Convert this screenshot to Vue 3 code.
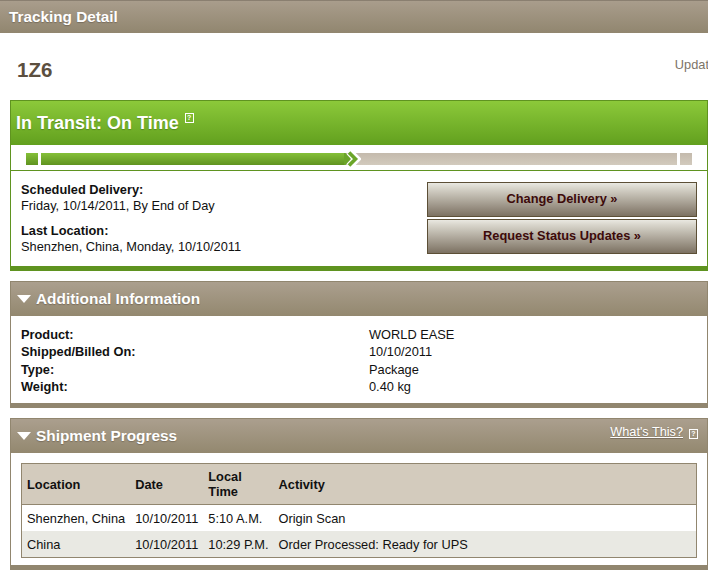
<template>
  <div class="page">
    <div class="top-bar">Tracking Detail</div>

    <div class="number-row">
      <span class="number">1Z6</span>
      <span class="updated">Updat</span>
    </div>

    <section class="status">
      <div class="status-head">
        <h2>In Transit: On Time</h2>
        <span class="help help-status">?</span>
      </div>
      <div class="track">
        <span class="seg done small"></span>
        <span class="seg done long"></span>
        <svg class="chevrons" width="17" height="18" viewBox="0 0 17 18">
          <path d="M5 2 L12 9 L5 16" fill="none" stroke="#fff" stroke-width="8" />
          <path d="M5 2.5 L11.5 9 L5 15.5" fill="none" stroke="#6ba528" stroke-width="3.6" />
          <path d="M0 3 H1.5 L7 9 L1.5 15 H0 Z" fill="#6ba528" />
        </svg>
        <span class="seg todo rest"></span>
        <span class="seg todo small"></span>
      </div>
      <div class="status-body">
        <div class="facts">
          <p><strong>Scheduled Delivery:</strong><br />Friday, 10/14/2011, By End of Day</p>
          <p><strong>Last Location:</strong><br />Shenzhen, China, Monday, 10/10/2011</p>
        </div>
        <div class="actions">
          <button v-for="label in actions" :key="label" type="button">{{ label }} »</button>
        </div>
      </div>
    </section>

    <section class="panel">
      <div class="panel-head">
        <svg class="arrow" width="14" height="8" viewBox="0 0 14 8"><path d="M0 0 H14 L7 8 Z" fill="#fff" /></svg>
        <h3>Additional Information</h3>
      </div>
      <div class="info">
        <template v-for="row in info" :key="row.label">
          <strong>{{ row.label }}</strong>
          <span>{{ row.value }}</span>
        </template>
      </div>
    </section>

    <section class="panel">
      <div class="panel-head">
        <svg class="arrow" width="14" height="8" viewBox="0 0 14 8"><path d="M0 0 H14 L7 8 Z" fill="#fff" /></svg>
        <h3>Shipment Progress</h3>
        <a class="whats" href="#">What's This?</a>
        <span class="help help-panel">?</span>
      </div>
      <div class="progress">
        <table>
          <thead>
            <tr>
              <th class="col-location">Location</th>
              <th class="col-date">Date</th>
              <th class="col-time">Local<br />Time</th>
              <th>Activity</th>
            </tr>
          </thead>
          <tbody>
            <tr v-for="row in scans" :key="row.time">
              <td>{{ row.location }}</td>
              <td>{{ row.date }}</td>
              <td>{{ row.time }}</td>
              <td>{{ row.activity }}</td>
            </tr>
          </tbody>
        </table>
      </div>
    </section>
  </div>
</template>

<script setup>
const actions = ['Change Delivery', 'Request Status Updates']

const info = [
  { label: 'Product:', value: 'WORLD EASE' },
  { label: 'Shipped/Billed On:', value: '10/10/2011' },
  { label: 'Type:', value: 'Package' },
  { label: 'Weight:', value: '0.40 kg' }
]

const scans = [
  { location: 'Shenzhen, China', date: '10/10/2011', time: '5:10 A.M.', activity: 'Origin Scan' },
  { location: 'China', date: '10/10/2011', time: '10:29 P.M.', activity: 'Order Processed: Ready for UPS' }
]
</script>

<style>
html, body {
  overflow: hidden;
  background: #fff;
}
</style>

<style scoped>
.page {
  width: 708px;
  height: 570px;
  overflow: hidden;
  font-family: "Liberation Sans", Arial, sans-serif;
  font-size: 12.8px;
  color: #111;
}
.top-bar {
  height: 32px;
  padding-left: 9px;
  line-height: 32px;
  border-top: 1px solid #8a7f70;
  background: linear-gradient(#a99d8c, #91866f);
  color: #fff;
  font-size: 15.3px;
  font-weight: bold;
  text-shadow: 0 1px 1px rgba(60, 50, 40, .35);
}
.number-row {
  display: flex;
  height: 67px;
  padding-left: 17px;
}
.number {
  margin-top: 25px;
  font-size: 20.5px;
  line-height: 23px;
  font-weight: bold;
  color: #5c4f3f;
}
.updated {
  margin-left: auto;
  margin-right: -1px;
  margin-top: 25px;
  line-height: 14px;
  color: #7d7468;
}
.status {
  margin-left: 10px;
  width: 698px;
  box-sizing: border-box;
  border: 1px solid #5f9320;
  border-bottom: 5px solid #5f9320;
}
.status-head {
  display: flex;
  height: 44px;
  padding-left: 5px;
  background: linear-gradient(#8cc93a, #62a01e);
  color: #fff;
}
.status-head h2 {
  margin: 12px 0 0;
  font-size: 18px;
  line-height: 21px;
  font-weight: bold;
  text-shadow: 0 1px 1px rgba(40, 70, 10, .35);
}
.help {
  box-sizing: border-box;
  width: 9px;
  height: 10px;
  border: 1px solid #fff;
  color: #fff;
  font-size: 7px;
  line-height: 8px;
  text-align: center;
  font-weight: bold;
}
.help-status {
  margin: 12px 0 0 6px;
}
.track {
  position: relative;
  display: flex;
  height: 26px;
  padding: 8px 15px 5px;
  box-sizing: border-box;
  border-bottom: 1px solid #5f9320;
  gap: 3px;
}
.seg {
  height: 12px;
  flex: none;
}
.seg.small {
  width: 12px;
}
.seg.done {
  background: linear-gradient(#85c038, #5f9320);
}
.seg.todo {
  background: linear-gradient(#c4baac, #d2cabd);
}
.seg.long {
  width: 304px;
}
.seg.rest {
  width: 332px;
  margin-left: -3px;
}
.chevrons {
  position: absolute;
  left: 333px;
  top: 5px;
  z-index: 1;
}
.status-body {
  display: flex;
  justify-content: space-between;
  height: 95px;
  padding: 11px 10px 0;
  box-sizing: border-box;
}
.facts p {
  margin: 0 0 9px;
  line-height: 16px;
  color: #111;
}
.actions {
  display: flex;
  flex-direction: column;
  gap: 2px;
}
.actions button {
  width: 270px;
  height: 35px;
  padding: 0 0 2px;
  border: 1px solid #5c4f36;
  background: linear-gradient(#e9e8e1, #d8d5cb 15%, #7c7162);
  color: #3d0a0a;
  font-family: inherit;
  font-size: 12.8px;
  font-weight: bold;
}
.panel {
  margin: 10px 0 0 10px;
  width: 698px;
  box-sizing: border-box;
  border: 1px solid #91866f;
  border-bottom: 5px solid #91866f;
}
.panel-head {
  display: flex;
  align-items: center;
  height: 34px;
  padding-left: 6px;
  background: linear-gradient(#ab9f8e, #93886f);
  color: #fff;
}
.panel-head h3 {
  margin: 0 0 0 5px;
  font-size: 15.4px;
  font-weight: bold;
  text-shadow: 0 1px 1px rgba(60, 50, 40, .35);
}
.arrow {
  flex: none;
}
.whats {
  margin-left: auto;
  margin-bottom: 8px;
  color: #fff;
  font-size: 12.7px;
  text-shadow: 0 1px 1px rgba(60, 50, 40, .35);
}
.help-panel {
  margin: 0 9px 4px 6px;
}
.info {
  display: grid;
  grid-template-columns: 348px 1fr;
  grid-auto-rows: 17.25px;
  height: 87px;
  box-sizing: border-box;
  padding: 10px 10px 0;
  align-items: center;
}
.progress {
  padding: 10px 10px 7px;
}
table {
  width: 676px;
  border-collapse: collapse;
  border: 1px solid #91866f;
}
th {
  height: 40px;
  padding: 0 5px;
  background: #d3cbbd;
  border-bottom: 1px solid #91866f;
  text-align: left;
  line-height: 15px;
  font-weight: bold;
}
td {
  height: 26px;
  padding: 0 5px;
  white-space: nowrap;
}
tbody tr:nth-child(2) td {
  background: #e9e9e3;
}
.col-location {
  width: 98px;
}
.col-date {
  width: 63px;
}
.col-time {
  width: 60px;
}
</style>
